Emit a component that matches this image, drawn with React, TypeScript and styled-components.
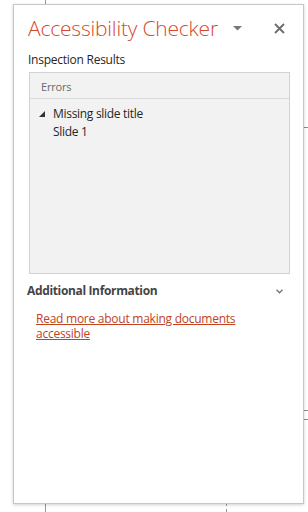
import React from "react";
import styled, { createGlobalStyle } from "styled-components";

const Global = createGlobalStyle`
  html, body { margin: 0; padding: 0; background: #ffffff; }
  body { font-family: "Open Sans", "Liberation Sans", sans-serif; }
`;

const Page = styled.div`
  position: relative;
  width: 308px;
  height: 512px;
  box-sizing: border-box;
  padding: 4px 0 0 13px;
  overflow: hidden;
  background: #ffffff;
`;

const GuideV = styled.div<{ $x: number; $top: number; $h: number; $dashed?: boolean }>`
  position: absolute;
  left: ${(p) => p.$x}px;
  top: ${(p) => p.$top}px;
  height: ${(p) => p.$h}px;
  width: 0;
  border-left: 1px ${(p) => (p.$dashed ? "dashed" : "solid")} #9a9a9a;
`;

const GuideH = styled.div<{ $y: number }>`
  position: absolute;
  left: 304px;
  top: ${(p) => p.$y}px;
  width: 6px;
  height: 0;
  border-top: 1px dashed #8a8a8a;
`;

const Panel = styled.div`
  position: relative;
  z-index: 1;
  width: 291px;
  height: 500px;
  box-sizing: border-box;
  background: #ffffff;
  border: 1px solid #c6c6c6;
  box-shadow: 0 1px 3px rgba(0, 0, 0, 0.18);
  padding: 9px 13px 0 14px;
  color: #262626;
`;

const Header = styled.div`
  display: flex;
  align-items: center;
  height: 28px;
`;

const Title = styled.div`
  flex: 1;
  font-size: 21px;
  font-weight: 300;
  line-height: 28px;
  color: #d4492a;
  letter-spacing: -0.2px;
  white-space: nowrap;
`;

const IconButton = styled.div<{ $w: number; $gap?: number }>`
  width: ${(p) => p.$w}px;
  height: 28px;
  margin-left: ${(p) => p.$gap ?? 0}px;
  display: flex;
  align-items: center;
  justify-content: center;
`;

const Label = styled.div`
  margin-top: 10px;
  font-size: 12px;
  line-height: 16px;
  letter-spacing: -0.25px;
  color: #262626;
`;

const ResultsBox = styled.div`
  margin: 4px 0 0 1px;
  height: 202px;
  box-sizing: border-box;
  background: #f2f2f2;
  border: 1px solid #d2d2d2;
`;

const GroupHeader = styled.div`
  height: 26px;
  box-sizing: border-box;
  padding: 3px 0 0 11px;
  font-size: 11px;
  line-height: 22px;
  color: #6a6a6a;
  border-bottom: 1px solid #dadada;
  letter-spacing: -0.2px;
`;

const Tree = styled.div`
  padding-top: 6px;
`;

const TreeRow = styled.div<{ $indent: number }>`
  display: flex;
  align-items: center;
  height: 18px;
  padding-left: ${(p) => p.$indent}px;
  font-size: 12px;
  line-height: 18px;
  color: #262626;
  letter-spacing: -0.3px;
`;

const Expander = styled.svg`
  width: 6px;
  height: 6px;
  margin-right: 8px;
  flex: none;
`;

const SectionRow = styled.div`
  display: flex;
  align-items: center;
  justify-content: space-between;
  margin: 9px 0 0 -1px;
  height: 16px;
`;

const SectionTitle = styled.div`
  font-size: 12px;
  font-weight: 700;
  line-height: 16px;
  color: #444444;
  letter-spacing: -0.35px;
`;

const Chevron = styled.svg`
  width: 7px;
  height: 5px;
  margin-right: 7px;
`;

const Link = styled.a`
  display: block;
  margin: 12px 0 0 8px;
  width: 220px;
  font-size: 12px;
  line-height: 15px;
  color: #c0421f;
  text-decoration: underline;
  text-underline-offset: 1px;
  letter-spacing: -0.25px;
  cursor: pointer;
`;

export default function App() {
  return (
    <>
      <Global />
      <Page>
        <GuideV $x={45} $top={0} $h={512} />
        <GuideV $x={226} $top={503} $h={9} $dashed />
        <GuideH $y={127} />
        <GuideH $y={410} />
        <GuideH $y={419} />
        <Panel>
          <Header>
            <Title>Accessibility Checker</Title>
            <IconButton $w={20}>
              <svg width="9" height="5" viewBox="0 0 9 5">
                <path d="M0 0 H9 L4.5 4.5 Z" fill="#777777" />
              </svg>
            </IconButton>
            <IconButton $w={22} $gap={21}>
              <svg width="11" height="11" viewBox="0 0 11 11">
                <path d="M1 1 L10 10 M10 1 L1 10" stroke="#6b6b6b" strokeWidth="1.8" />
              </svg>
            </IconButton>
          </Header>
          <Label>Inspection Results</Label>
          <ResultsBox>
            <GroupHeader>Errors</GroupHeader>
            <Tree>
              <TreeRow $indent={9}>
                <Expander viewBox="0 0 6 6">
                  <path d="M6 0 V6 H0 Z" fill="#333333" />
                </Expander>
                Missing slide title
              </TreeRow>
              <TreeRow $indent={23}>Slide 1</TreeRow>
            </Tree>
          </ResultsBox>
          <SectionRow>
            <SectionTitle>Additional Information</SectionTitle>
            <Chevron viewBox="0 0 7 5">
              <path d="M0.5 0.8 L3.5 3.8 L6.5 0.8" stroke="#777777" strokeWidth="1.4" fill="none" />
            </Chevron>
          </SectionRow>
          <Link>Read more about making documents accessible</Link>
        </Panel>
      </Page>
    </>
  );
}
